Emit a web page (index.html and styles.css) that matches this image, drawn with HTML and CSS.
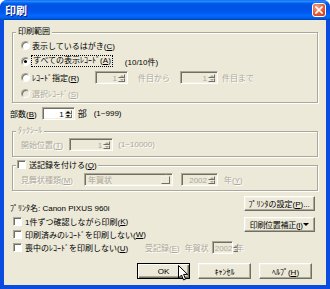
FILE: index.html
```html
<!DOCTYPE html>
<html lang="ja">
<head>
    <meta charset="UTF-8">
    <meta name="viewport" content="width=device-width, initial-scale=1.0">
    <title>印刷</title>
    <link rel="stylesheet" href="styles.css">
</head>
<body>
    <div class="window">
        <div class="titlebar">
            <span class="title">印刷</span>
            <span class="close-btn">
                <svg width="8" height="8" viewBox="0 0 8 8"><path d="M1 1L7 7M7 1L1 7" stroke="#fff" stroke-width="1.6" stroke-linecap="square"/></svg>
            </span>
        </div>

        <div class="client">
            <fieldset class="group range">
                <legend>印刷範囲</legend>
                <div class="row">
                    <span class="radio"></span>
                    <span>表示しているはがき(<u>C</u>)</span>
                </div>
                <div class="row">
                    <span class="radio checked"></span>
                    <span class="focus">すべての表示ﾚｺｰﾄﾞ(<u>A</u>)</span>
                    <span class="count">(10/10件)</span>
                </div>
                <div class="row">
                    <span class="radio"></span>
                    <span class="rec-label">ﾚｺｰﾄﾞ指定(<u>R</u>)</span>
                    <span class="spin off rec-from"><span class="val">1</span><span class="arrows"><i class="up"></i><i class="down"></i></span></span>
                    <span class="off-text from-label">件目から</span>
                    <span class="spin off rec-to"><span class="val">1</span><span class="arrows"><i class="up"></i><i class="down"></i></span></span>
                    <span class="off-text to-label">件目まで</span>
                </div>
                <div class="row off-text">
                    <span class="radio off"></span>
                    <span>選択ﾚｺｰﾄﾞ(<u>S</u>)</span>
                </div>
            </fieldset>

            <div class="copies">
                <span>部数(<u>B</u>)</span>
                <span class="spin copies-spin"><span class="val">1</span><span class="arrows"><i class="up"></i><i class="down"></i></span></span>
                <span class="copies-unit">部</span>
                <span class="copies-range">(1~999)</span>
            </div>

            <fieldset class="group tack">
                <legend class="off-text">ﾀｯｸｼｰﾙ</legend>
                <div class="row off-text">
                    <span>開始位置(<u>T</u>)</span>
                    <span class="spin off start-spin"><span class="val">1</span><span class="arrows"><i class="up"></i><i class="down"></i></span></span>
                    <span class="start-range">(1~10000)</span>
                </div>
            </fieldset>

            <fieldset class="group send">
                <legend><span class="check"></span>送記録を付ける(<u>Q</u>)</legend>
                <div class="row off-text">
                    <span>見舞状種類(<u>M</u>)</span>
                    <span class="select off"><span class="val">年賀状</span><span class="drop"><i class="down"></i></span></span>
                    <span class="spin off year-spin"><span class="val">2002</span><span class="arrows"><i class="up"></i><i class="down"></i></span></span>
                    <span class="year-label">年(<u>Y</u>)</span>
                </div>
            </fieldset>

            <div class="lower">
                <div class="options">
                    <div class="printer">ﾌﾟﾘﾝﾀ名: Canon PIXUS 960i</div>
                    <div class="opt"><span class="check"></span>1件ずつ確認しながら印刷(<u>K</u>)</div>
                    <div class="opt"><span class="check"></span>印刷済みのﾚｺｰﾄﾞを印刷しない(<u>W</u>)</div>
                    <div class="opt">
                        <span class="check"></span>
                        <span class="opt-label">喪中のﾚｺｰﾄﾞを印刷しない(<u>U</u>)</span>
                        <span class="off-text">受記録(<u>E</u>)</span>
                        <span class="off-text recv-kind">年賀状</span>
                        <span class="spin off recv-spin"><span class="val">2002</span><span class="arrows"><i class="up"></i><i class="down"></i></span></span>
                        <span class="off-text recv-year">年</span>
                    </div>
                </div>
                <div class="side-buttons">
                    <button class="btn">ﾌﾟﾘﾝﾀの設定(<u>P</u>)...</button>
                    <button class="btn split"><span>印刷位置補正(<u>I</u>)</span><i class="caret"></i></button>
                </div>
            </div>

            <div class="actions">
                <button class="btn default">OK</button>
                <button class="btn">ｷｬﾝｾﾙ</button>
                <button class="btn">ﾍﾙﾌﾟ(<u>H</u>)</button>
            </div>
        </div>

        <!-- mouse pointer over the OK button -->
        <svg class="cursor" width="11" height="17" viewBox="0 0 11 17">
            <path d="M0.5 0.5V13L3.5 10L5.6 15L7.6 14.1L5.6 9.4H9.6Z" fill="#fff" stroke="#000" stroke-width="1" stroke-linejoin="round"/>
        </svg>
    </div>
</body>
</html>
```

FILE: styles.css
```css
* {
    box-sizing: border-box;
}

body {
    margin: 0;
    background: #fff;
    font-family: "Liberation Sans", "Noto Sans CJK JP", sans-serif;
    font-size: 8px;
    color: #000;
}

.window {
    position: relative;
    width: 330px;
    height: 289px;
    display: flex;
    flex-direction: column;
    background: #0a4be0;
    border-radius: 7px 7px 0 0;
    overflow: hidden;
}

.titlebar {
    height: 20px;
    flex-shrink: 0;
    display: flex;
    align-items: center;
    padding: 0 4px 0 5px;
    background: linear-gradient(#0058ee 0%, #3a93ff 5%, #127dff 10%, #0262ee 16%, #0057e5 22%, #0054e3 30%, #0055eb 56%, #005bf5 66%, #026afe 78%, #0062ef 88%, #0052d6 94%, #0040ab 100%);
}

.title {
    color: #fff;
    font-family: "Noto Sans CJK JP", sans-serif;
    font-size: 11px;
    font-weight: bold;
    line-height: 20px;
    text-shadow: 1px 1px 0 #0a1883;
}

.close-btn {
    margin-left: auto;
    width: 14px;
    height: 14px;
    display: flex;
    align-items: center;
    justify-content: center;
    border: 1px solid #fff;
    border-radius: 3px;
    background: radial-gradient(circle at 35% 30%, #f3a58c, #e2552f 60%, #c2381a);
}

.client {
    flex: 1;
    margin: 0 4px 4px;
    padding: 7px 8px 0 6px;
    background: #ece9d8;
    display: flex;
    flex-direction: column;
}

u {
    text-decoration-thickness: 1px;
}

.off-text {
    color: #aca899;
    text-shadow: 1px 1px 0 #fff;
}

/* group boxes */
.group {
    margin: 0 0 0 2px;
    padding: 0;
    min-width: 0;
    border: 1px solid #aca899;
    box-shadow: inset 1px 1px 0 #fff, 1px 1px 0 #fff;
}

.group legend {
    margin-left: 3px;
    padding: 0 2px;
    height: 10px;
    line-height: 10px;
    background: #ece9d8;
    white-space: nowrap;
}

.range {
    padding-bottom: 1px;
}

.tack {
    margin-top: 6px;
    padding-bottom: 4px;
}

.send {
    margin-top: 3px;
    padding-bottom: 2px;
}

.send legend {
    padding: 0 1px;
}

.send .row {
    height: 18px;
}

.row {
    display: flex;
    align-items: center;
    height: 16px;
    padding-left: 8px;
    white-space: nowrap;
}

/* radio buttons and check boxes */
.radio,
.check {
    flex-shrink: 0;
    width: 9px;
    height: 9px;
    border: 1px solid;
    border-color: #aca899 #fff #fff #aca899;
    background: #fff;
    box-shadow: inset 1px 1px 0 #716f64;
}

.radio {
    display: flex;
    align-items: center;
    justify-content: center;
    margin-right: 2px;
    border-radius: 50%;
}

.radio.checked::after {
    content: "";
    width: 3px;
    height: 3px;
    border-radius: 50%;
    background: #000;
}

.radio.off {
    background: #ece9d8;
}

.check {
    display: inline-block;
    margin-right: 3px;
    vertical-align: -1px;
}

.focus {
    padding: 0 1px;
    line-height: 10px;
    outline: 1px dotted #000;
}

.count {
    margin-left: 13px;
}

.rec-label {
    width: 63px;
}

/* edit boxes with up/down arrows */
.spin,
.select {
    display: flex;
    flex-shrink: 0;
    height: 13px;
    padding: 2px 2px 1px 2px;
    border: 1px solid;
    border-color: #aca899 #fff #fff #aca899;
    background: #fff;
    box-shadow: inset 1px 1px 0 #716f64, inset -1px -1px 0 #f1efe2;
    color: #000;
    text-shadow: none;
}

.spin.off,
.select.off {
    background: #ece9d8;
    color: #aca899;
}

.spin .val {
    flex: 1;
    text-align: right;
    line-height: 9px;
    padding-right: 1px;
}

.select .val {
    flex: 1;
    line-height: 9px;
    padding-left: 1px;
}

.arrows {
    width: 7px;
    display: flex;
    flex-direction: column;
}

.arrows i,
.drop {
    flex: 1;
    display: flex;
    align-items: center;
    justify-content: center;
    background: #ece9d8;
    border: 1px solid;
    border-color: #f1efe2 #716f64 #716f64 #f1efe2;
}

.drop {
    flex: 0 0 9px;
}

.up::after,
.down::after,
.caret {
    content: "";
    width: 0;
    height: 0;
    border-left: 2px solid transparent;
    border-right: 2px solid transparent;
}

.up::after {
    border-bottom: 2px solid currentColor;
}

.down::after {
    border-top: 2px solid currentColor;
}

.off .up::after,
.off .down::after {
    color: #aca899;
}

.rec-from {
    width: 33px;
}

.from-label {
    margin-left: 10px;
}

.rec-to {
    width: 38px;
    margin-left: 10px;
}

.to-label {
    margin-left: 4px;
}

.copies {
    display: flex;
    align-items: center;
    height: 14px;
    margin-top: 3px;
    white-space: nowrap;
}

.copies-spin {
    width: 33px;
    margin-left: 5px;
}

.copies-unit {
    margin-left: 3px;
    font-size: 9px;
}

.copies-range {
    margin-left: 7px;
}

.start-spin {
    width: 44px;
    margin-left: 6px;
}

.start-range {
    margin-left: 5px;
}

.select {
    width: 89px;
    margin-left: 11px;
}

.year-spin {
    width: 37px;
    margin-left: 8px;
}

.year-label {
    margin-left: 6px;
}

/* lower part */
.lower {
    display: flex;
}

.options {
    flex: 1;
    padding-top: 11px;
}

.printer {
    height: 13px;
    line-height: 13px;
    white-space: nowrap;
}

.opt {
    display: flex;
    align-items: center;
    height: 13px;
    padding-left: 3px;
    white-space: nowrap;
}

.opt-label {
    width: 120px;
}

.recv-kind {
    margin-left: 5px;
}

.recv-spin {
    width: 21px;
    margin-left: 3px;
    padding-right: 1px;
}

.recv-spin .arrows {
    width: 5px;
}

.recv-year {
    margin-left: 3px;
}

.side-buttons {
    width: 80px;
    margin-right: 6px;
    padding-top: 5px;
    display: flex;
    flex-direction: column;
    gap: 6px;
}

.btn {
    height: 15px;
    padding: 0;
    font: inherit;
    color: #000;
    white-space: nowrap;
    background: #ece9d8;
    border: 1px solid;
    border-color: #fff #716f64 #716f64 #fff;
    box-shadow: inset -1px -1px 0 #aca899, inset 1px 1px 0 #f1efe2;
}

.btn.split {
    display: flex;
    align-items: center;
    justify-content: space-between;
    padding: 0 5px 0 5px;
    letter-spacing: -0.3px;
}

.caret {
    border-left-width: 3px;
    border-right-width: 3px;
    border-top: 3px solid #000;
}

.btn.default {
    border: 1px solid #000;
    box-shadow: inset 1px 1px 0 #fff, inset -1px -1px 0 #716f64, inset -2px -2px 0 #aca899;
}

.actions {
    display: flex;
    justify-content: flex-end;
    gap: 8px;
    margin: 9px 6px 0 0;
}

.actions .btn {
    width: 53px;
    height: 16px;
}

.cursor {
    position: absolute;
    left: 178px;
    top: 265px;
}
```
